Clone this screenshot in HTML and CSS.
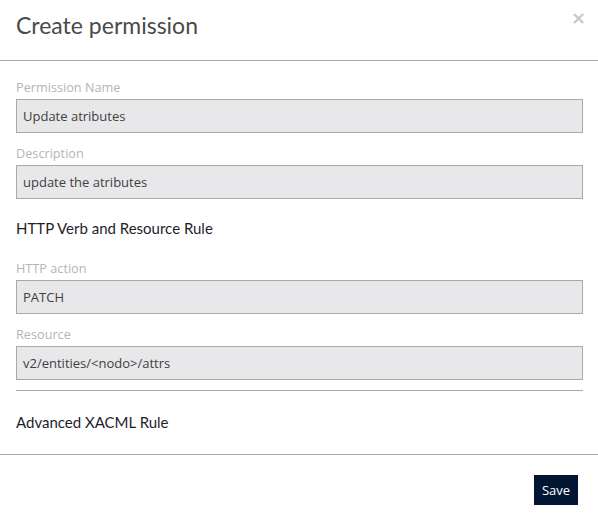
FILE: index.html
```html
<!DOCTYPE html>
<html>
<head>
<meta charset="utf-8">
<link rel="stylesheet" href="styles.css">
</head>
<body>
<div class="modal">
  <div class="header">
    <h1 class="title">Create permission</h1>
    <span class="close">×</span>
  </div>
  <div class="body">
    <div class="field">
      <label class="label">Permission Name</label>
      <div class="input">Update atributes</div>
    </div>
    <div class="field">
      <label class="label">Description</label>
      <div class="input">update the atributes</div>
    </div>
    <h2 class="section">HTTP Verb and Resource Rule</h2>
    <div class="field">
      <label class="label">HTTP action</label>
      <div class="input">PATCH</div>
    </div>
    <div class="field">
      <label class="label">Resource</label>
      <div class="input">v2/entities/&lt;nodo&gt;/attrs</div>
    </div>
    <hr class="rule">
    <h2 class="section adv">Advanced XACML Rule</h2>
  </div>
  <div class="footer">
    <button class="save">Save</button>
  </div>
</div>
</body>
</html>
```
FILE: styles.css
```css
html, body {
  margin: 0;
  padding: 0;
  background: #fff;
}
.modal {
  width: 598px;
  height: 523px;
  font-family: "Open Sans", "Liberation Sans", sans-serif;
}
.header {
  position: relative;
  height: 60px;
  border-bottom: 1px solid #a8a8a8;
  padding: 0 16px;
}
.title {
  margin: 0;
  padding-top: 9px;
  font-family: "Lato", sans-serif;
  font-weight: 400;
  font-size: 23px;
  line-height: 32px;
  color: #4a4a4a;
}
.close {
  position: absolute;
  right: 12px;
  top: 7px;
  font-size: 18px;
  color: #c8c8cc;
  font-family: "DejaVu Sans", sans-serif;
  font-weight: bold;
}
.body {
  display: flex;
  flex-direction: column;
  padding: 17px 15px 0 16px;
}
.field {
  display: flex;
  flex-direction: column;
  margin-bottom: 11px;
}
.label {
  font-size: 12.7px;
  line-height: 18px;
  color: #b5b5b5;
  margin-bottom: 3px;
}
.input {
  box-sizing: border-box;
  height: 34px;
  border: 1px solid #a9a9a9;
  background: #e8e8ea;
  font-size: 13px;
  line-height: 32px;
  padding: 0 6px;
  color: #404040;
}
.section {
  margin: 8px 0 21px;
  font-family: "Lato", sans-serif;
  font-weight: 400;
  font-size: 15px;
  line-height: 20px;
  color: #1e1e2a;
}
.rule {
  width: 100%;
  margin: -1px 0 0;
  border: 0;
  border-top: 1px solid #a8a8a8;
}
.section.adv {
  margin: 21px 0 0;
}
.footer {
  margin-top: 22px;
  border-top: 1px solid #a8a8a8;
  display: flex;
  justify-content: flex-end;
  padding: 20px 20px 0 0;
}
.save {
  width: 44px;
  height: 30px;
  background: #021633;
  color: #fff;
  border: 0;
  padding: 0;
  font-family: "Open Sans", sans-serif;
  font-size: 13px;
}
```
